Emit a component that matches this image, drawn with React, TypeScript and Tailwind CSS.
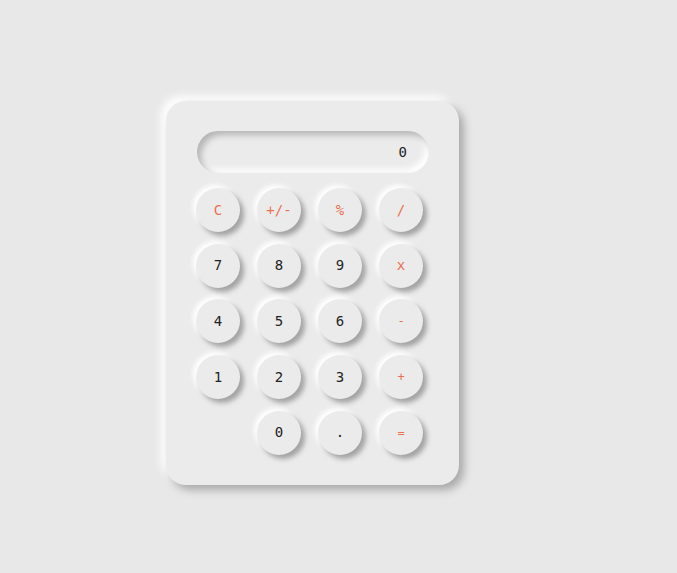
const keys: { label: string; op?: boolean; small?: boolean; col?: string }[] = [
  { label: 'C', op: true },
  { label: '+/-', op: true },
  { label: '%', op: true },
  { label: '/', op: true },
  { label: '7' },
  { label: '8' },
  { label: '9' },
  { label: 'x', op: true },
  { label: '4' },
  { label: '5' },
  { label: '6' },
  { label: '-', op: true, small: true },
  { label: '1' },
  { label: '2' },
  { label: '3' },
  { label: '+', op: true, small: true },
  { label: '0', col: 'col-start-2' },
  { label: '.' },
  { label: '=', op: true, small: true },
]

function App() {
  return (
    <div className="w-[677px] h-[573px] bg-[#e8e8e8] pt-[101px] pl-[166px] font-['DejaVu_Sans_Mono',monospace]">
      <div className="w-[293px] h-[384px] rounded-[20px] bg-[#ebebeb] pt-[30px] pl-[31px] shadow-[5px_5px_8px_#a9a9a9,-5px_-5px_8px_#ffffff]">
        <div className="w-[232px] h-[42px] rounded-full bg-[#ebebeb] flex items-center justify-end pr-[22px] text-[14px] text-[#222] shadow-[inset_4px_4px_6px_#b5b5b5,inset_-4px_-4px_6px_#ffffff]">
          0
        </div>
        <div className="grid grid-cols-[repeat(4,44px)] gap-x-[17px] gap-y-[11.7px] mt-[15px] -ml-[1px]">
          {keys.map((k, i) => (
            <button
              key={i}
              className={`${k.col ?? ''} size-[44px] rounded-full bg-[#ebebeb] flex items-center justify-center shadow-[4px_4px_5px_#a3a3a3,-3px_-3px_5px_#ffffff] ${
                k.op ? 'text-[#ec6f50]' : 'text-[#222]'
              } ${k.small ? 'text-[12px]' : 'text-[14px]'}`}
            >
              {k.label}
            </button>
          ))}
        </div>
      </div>
    </div>
  )
}

export default App
